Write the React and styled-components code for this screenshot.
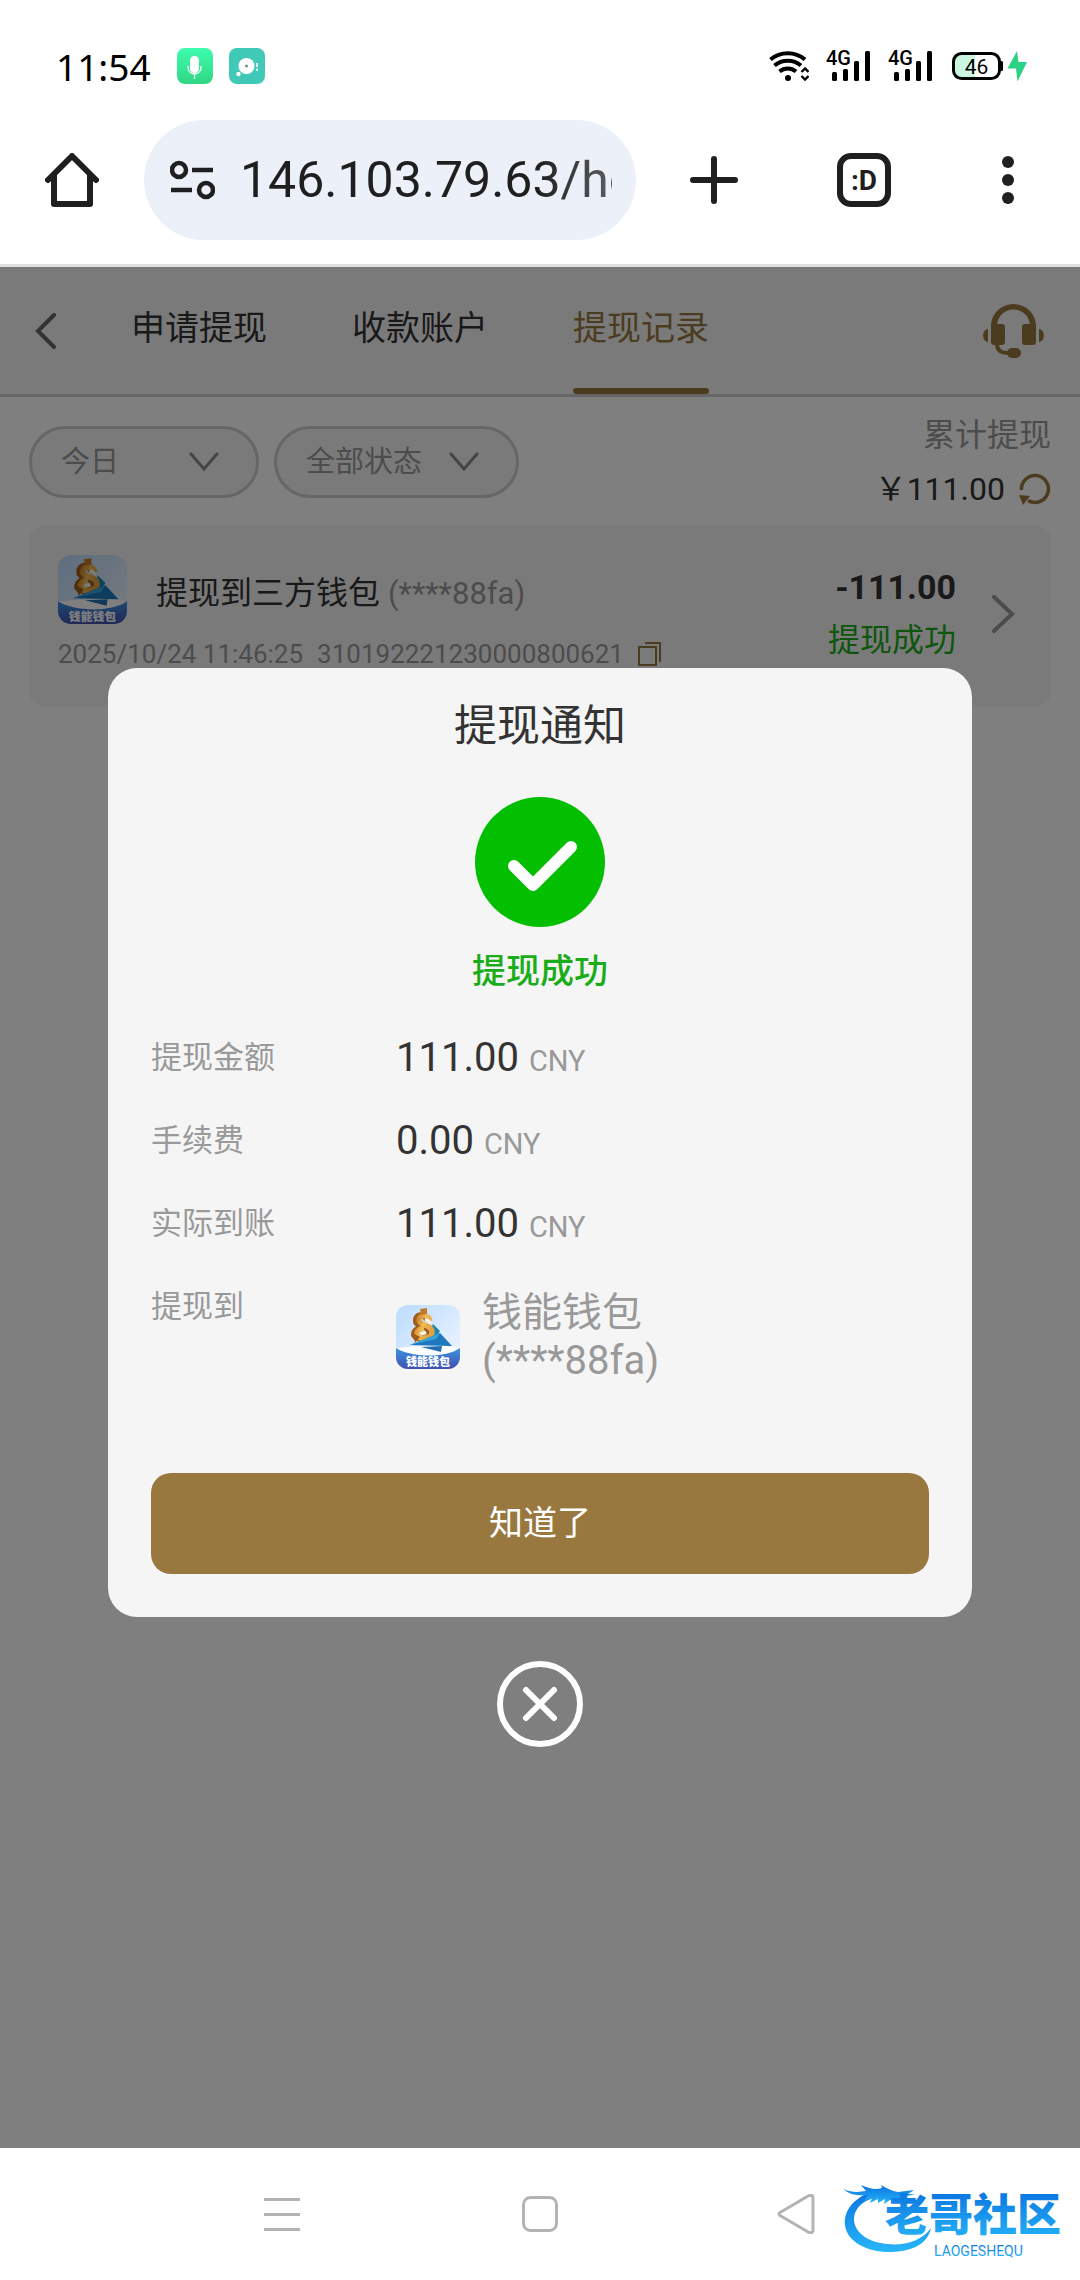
import styled, { createGlobalStyle } from 'styled-components';

const GOLD = '#98783f';

export default function App() {
    return (
        <Screen>
            <GlobalStyle />
            <StatusBar />
            <BrowserBar />
            <Page>
                <PageHeader />
                <Filters />
                <RecordCard />
                <Overlay>
                    <Notice />
                    <CloseButton aria-label="关闭">
                        <svg width="86" height="86" viewBox="0 0 86 86" fill="none" stroke="#fff" strokeWidth="6" strokeLinecap="round">
                            <circle cx="43" cy="43" r="40" />
                            <path d="M29 29L57 57M57 29L29 57" />
                        </svg>
                    </CloseButton>
                </Overlay>
            </Page>
            <SystemNav />
        </Screen>
    );
}

function StatusBar() {
    return (
        <Status>
            <Group $gap="16px">
                <Clock>11:54</Clock>
                <svg width="36" height="36" viewBox="0 0 36 36">
                    <defs>
                        <linearGradient id="mic" x1="0" y1="0" x2="0" y2="1">
                            <stop offset="0" stopColor="#3dfcae" />
                            <stop offset="1" stopColor="#31d684" />
                        </linearGradient>
                    </defs>
                    <rect width="36" height="36" rx="8" fill="url(#mic)" />
                    <rect x="13" y="8" width="9" height="17" rx="4.5" fill="#fff" />
                    <path d="M11 18v1.500a6.500 6.500 0 0 0 13 0V18M17.500 26v5" stroke="#fff" strokeWidth="1.300" fill="none" />
                </svg>
                <svg width="36" height="36" viewBox="0 0 36 36">
                    <rect width="36" height="36" rx="8" fill="#41c9b7" />
                    <circle cx="17.500" cy="18" r="8" fill="#fff" />
                    <circle cx="17.500" cy="18" r="1.500" fill="#6b8f8a" />
                    <circle cx="9.500" cy="26" r="2.200" fill="#fff" />
                    <path d="M28 15v8" stroke="#fff" strokeWidth="1.600" strokeDasharray="4 1.500" />
                </svg>
            </Group>
            <Group $gap="17px">
                <svg width="40" height="32" viewBox="0 0 40 32" fill="none" stroke="#000">
                    <g strokeWidth="4">
                        <path d="M1.500 9.500A27 27 0 0 1 36 9.500" />
                        <path d="M5.500 15.500A20.500 20.500 0 0 1 32 15.500" />
                        <path d="M10.500 21.500A13 13 0 0 1 27 21.500" />
                    </g>
                    <circle cx="19" cy="28" r="3" fill="#000" stroke="none" />
                    <path d="M32.500 22L36 18.500L39.500 22M32.500 26L36 29.500L39.500 26" strokeWidth="2.400" />
                </svg>
                <Signal />
                <Signal />
                <svg width="78" height="32" viewBox="0 0 78 32">
                    <path d="M4 12a8 8 0 0 1 8-8H25V28H12a8 8 0 0 1-8-8z" fill="#c9f5e1" />
                    <rect x="3.500" y="3.500" width="46" height="25" rx="8" fill="none" stroke="#000" strokeWidth="3" />
                    <path d="M50 11h1.500a1.500 1.500 0 0 1 1.500 1.500v7a1.500 1.500 0 0 1-1.500 1.500H50z" />
                    <text x="26.500" y="23.500" fontSize="21" textAnchor="middle">46</text>
                    <path d="M67 1L57.500 18.500H66L67.500 31.500L77 12H68.500z" fill="#2bd284" />
                </svg>
            </Group>
        </Status>
    );
}

function Signal() {
    return (
        <svg width="45" height="48" viewBox="0 -8 45 48">
            <text x="0" y="15" fontSize="20" fontWeight="500">4G</text>
            <rect x="6" y="22" width="5" height="9" rx="1.500" />
            <rect x="17" y="19" width="5" height="12" rx="1.500" />
            <rect x="28" y="11" width="5" height="20" rx="1.500" />
            <rect x="39" y="1" width="5" height="30" rx="1.500" />
        </svg>
    );
}

function BrowserBar() {
    return (
        <Toolbar>
            <IconButton aria-label="主页">
                <svg width="54" height="54" viewBox="0 0 54 54" fill="none" stroke="#1f1f1f" strokeWidth="6" strokeLinecap="round" strokeLinejoin="round">
                    <path d="M3 27L27 3L51 27M9 22V51H45V22" />
                </svg>
            </IconButton>
            <AddressBar>
                <svg width="45" height="40" viewBox="0 0 45 40" fill="none" stroke="#1f1f1f">
                    <circle cx="9" cy="10" r="7" strokeWidth="4.500" />
                    <circle cx="36" cy="30" r="7" strokeWidth="4.500" />
                    <path d="M22 10H43M1 30H22" strokeWidth="4.500" />
                </svg>
                <UrlInput aria-label="网址" defaultValue="146.103.79.63/home" />
            </AddressBar>
            <Actions>
                <IconButton aria-label="新标签页">
                    <svg width="54" height="54" viewBox="0 0 54 54" stroke="#1f1f1f" strokeWidth="6" strokeLinecap="round">
                        <path d="M27 6V48M6 27H48" />
                    </svg>
                </IconButton>
                <TabCount>:D</TabCount>
                <IconButton aria-label="更多">
                    <svg width="42" height="54" viewBox="0 0 42 54" fill="#1f1f1f">
                        <circle cx="21" cy="9" r="6" />
                        <circle cx="21" cy="27" r="6" />
                        <circle cx="21" cy="45" r="6" />
                    </svg>
                </IconButton>
            </Actions>
        </Toolbar>
    );
}

function PageHeader() {
    return (
        <Header>
            <IconButton aria-label="返回">
                <svg width="22" height="36" viewBox="0 0 22 36" fill="none" stroke="#666" strokeWidth="4" strokeLinecap="round">
                    <path d="M19 2L3 18L19 34" />
                </svg>
            </IconButton>
            <Tabs>
                <Tab>申请提现</Tab>
                <Tab>收款账户</Tab>
                <Tab $active>提现记录</Tab>
            </Tabs>
            <IconButton aria-label="客服">
                <svg width="62" height="54" viewBox="0 0 62 54" fill={GOLD}>
                    <path d="M8 25V22a22.500 22 0 0 1 45 0v3h-6v-3a16.500 16.500 0 0 0-33 0v3z" />
                    <rect x="8" y="20" width="14" height="21" rx="3" />
                    <rect x="39" y="20" width="14" height="21" rx="3" />
                    <path d="M5 25v13C-1.500 37-1.500 26 5 25zM56 25v13C62.500 37 62.500 26 56 25z" />
                    <path d="M14 40c0 7 4 9 13 9" fill="none" stroke={GOLD} strokeWidth="4" />
                    <rect x="24" y="44" width="14" height="10" rx="5" />
                </svg>
            </IconButton>
        </Header>
    );
}

function Chevron() {
    return (
        <svg width="30" height="20" viewBox="0 0 30 20" fill="none" stroke="#888" strokeWidth="3" strokeLinecap="round">
            <path d="M2 2L15 17L28 2" />
        </svg>
    );
}

function Filters() {
    return (
        <FilterRow>
            <Group $gap="15px">
                <Picker $width="230px">
                    <select aria-label="日期"><option>今日</option></select>
                    <Chevron />
                </Picker>
                <Picker $width="245px">
                    <select aria-label="状态"><option>全部状态</option></select>
                    <Chevron />
                </Picker>
            </Group>
            <Total>
                <span>累计提现</span>
                <TotalAmount>
                    ￥111.00
                    <IconButton aria-label="刷新">
                        <svg width="32" height="34" viewBox="0 0 32 34">
                            <path d="M2.500 18A13.500 13.500 0 1 1 9 28.500" fill="none" stroke={GOLD} strokeWidth="3.500" />
                            <path d="M0 23L11 24L4 33z" fill={GOLD} />
                        </svg>
                    </IconButton>
                </TotalAmount>
            </Total>
        </FilterRow>
    );
}

function WalletLogo({ size, id }) {
    return (
        <svg width={size} height={size} viewBox="0 0 64 64">
            <defs>
                <linearGradient id={id + 'sky'} x1="0" y1="0" x2="1" y2="1">
                    <stop offset="0" stopColor="#bcdcff" />
                    <stop offset="1" stopColor="#f0f6ff" />
                </linearGradient>
                <linearGradient id={id + 'sea'} x1="0" y1="0" x2="0" y2="1">
                    <stop offset="0" stopColor="#3b93e2" />
                    <stop offset="1" stopColor="#4250ae" />
                </linearGradient>
                <linearGradient id={id + 'gold'} x1="0" y1="0" x2="1" y2="0.500">
                    <stop offset="0" stopColor="#c27a28" />
                    <stop offset="0.500" stopColor="#f3bb55" />
                    <stop offset="1" stopColor="#e0a243" />
                </linearGradient>
                <clipPath id={id + 'clip'}><rect width="64" height="64" rx="12" /></clipPath>
            </defs>
            <g clipPath={`url(#${id}clip)`}>
                <rect width="64" height="64" fill={`url(#${id}sky)`} />
                <path d="M37 19L44 26L40 32L32 30z" fill="#1b86b4" />
                <path d="M31 15C29 8 19 9 20 16C20 22 33 20 33 27C33 35 21 35 18 30C18 25 22 23 26 23" fill="none" stroke="#a05c1a" strokeWidth="6" />
                <path d="M34 16C33 9 23 9 23 15C23 21 36 19 36 27C36 34 24 35 21 30C20 26 24 23 28 24" fill="none" stroke={`url(#${id}gold)`} strokeWidth="5.500" />
                <path d="M24 4L31 3L31 9L25 10z" fill="#c27a28" />
                <path d="M17 28L24 32L19 38z" fill="#a05c1a" />
                <path d="M29 15C32 14 34 16 34 19M25 29C27 27 29 28 30 29" fill="none" stroke="#fff6e4" strokeWidth="2.500" />
                <path d="M14 40L44 28L56 41z" fill="#1d78bd" />
                <path d="M14 40L44 28L40 34z" fill="#36a4d8" />
                <path d="M0 43C20 41 44 40 64 43V54H0z" fill="#fff" />
                <path d="M25 42L46 41L45 47z" fill="#246fb0" />
                <path d="M0 43C14 52 48 54 64 43V64H0z" fill={`url(#${id}sea)`} />
                <text x="32" y="61" fontSize="11" fontWeight="900" textAnchor="middle" fill="#fff">钱能钱包</text>
            </g>
        </svg>
    );
}

function RecordCard() {
    return (
        <Card>
            <div>
                <CardTitle>
                    <WalletLogo size={69} id="card" />
                    <p>提现到三方钱包 <small>(****88fa)</small></p>
                </CardTitle>
                <CardMeta>
                    <span>2025/10/24 11:46:25</span>
                    <span>310192221230000800621</span>
                    <IconButton aria-label="复制">
                        <svg width="24" height="24" viewBox="0 0 24 24" fill="none" stroke={GOLD} strokeWidth="2">
                            <path d="M1 5H18V23H1zM7 1H22V20" />
                        </svg>
                    </IconButton>
                </CardMeta>
            </div>
            <CardAmount>
                <strong>-111.00</strong>
                <span>提现成功</span>
            </CardAmount>
            <svg width="24" height="38" viewBox="0 0 24 38" fill="none" stroke="#999" strokeWidth="4" strokeLinecap="round">
                <path d="M3 2L21 19L3 36" />
            </svg>
        </Card>
    );
}

function Notice() {
    return (
        <Dialog role="dialog" aria-label="提现通知">
            <h2>提现通知</h2>
            <svg width="130" height="130" viewBox="0 0 130 130" fill="none">
                <circle cx="65" cy="65" r="65" fill="#04be02" />
                <path d="M39 69L58 88L96 50" stroke="#fff" strokeWidth="12" strokeLinecap="round" strokeLinejoin="round" />
            </svg>
            <Result>提现成功</Result>
            <Details>
                <dt>提现金额</dt>
                <dd>111.00 <small>CNY</small></dd>
                <dt>手续费</dt>
                <dd>0.00 <small>CNY</small></dd>
                <dt>实际到账</dt>
                <dd>111.00 <small>CNY</small></dd>
                <dt>提现到</dt>
                <Wallet>
                    <WalletLogo size={64} id="dialog" />
                    <span>钱能钱包<br />(****88fa)</span>
                </Wallet>
            </Details>
            <Confirm>知道了</Confirm>
        </Dialog>
    );
}

function SystemNav() {
    return (
        <NavBar>
            <IconButton aria-label="最近任务">
                <svg width="40" height="40" viewBox="0 0 40 40" stroke="#b3b3b3" strokeWidth="3">
                    <path d="M1 5.500H37M1 20.500H37M1 35.500H37" />
                </svg>
            </IconButton>
            <IconButton aria-label="桌面">
                <svg width="40" height="40" viewBox="0 0 40 40" fill="none" stroke="#b3b3b3" strokeWidth="3">
                    <rect x="3.500" y="3.500" width="33" height="33" rx="7" />
                </svg>
            </IconButton>
            <IconButton aria-label="后退">
                <svg width="40" height="40" viewBox="0 0 40 40" fill="none" stroke="#b3b3b3" strokeWidth="3" strokeLinejoin="round">
                    <path d="M3 18.500L32 1.500Q36 0.500 36 4V36Q36 39.500 32 38.500L3 21.500Q1 20 3 18.500z" />
                </svg>
            </IconButton>
            <Watermark width="230" height="80" viewBox="0 0 230 80">
                <defs>
                    <linearGradient id="brand" x1="0" y1="0" x2="0" y2="1">
                        <stop offset="0" stopColor="#0a74e0" />
                        <stop offset="1" stopColor="#27b6f8" />
                    </linearGradient>
                </defs>
                <g fill="url(#brand)">
                    <path d="M30 10C6 20 2 34 3 44C5 62 28 72 50 71C72 70 86 62 89 47C80 60 62 65 45 63C24 61 12 50 12 38C12 28 20 20 34 16z" />
                    <path d="M1 8C10 12 18 11 24 10L19 4C28 8 34 9 40 7L39 4C44 7 50 10 56 11L72 9L66 13L73 13L62 16L70 18L69 21L60 18L52 18L56 22L48 19L42 23L43 18L36 22L36 18L28 22L30 17L22 20L26 14C16 15 8 14 1 8z" />
                    <text x="43" y="50" fontSize="44" fontWeight="900">老哥社区</text>
                    <text x="92" y="75" fontSize="14">LAOGESHEQU</text>
                </g>
            </Watermark>
        </NavBar>
    );
}

const GlobalStyle = createGlobalStyle`
    * {
        box-sizing: border-box;
        margin: 0;
        padding: 0;
    }

    body, button, input, select, text {
        font-family: Roboto, 'Noto Sans CJK SC', sans-serif;
    }

    button {
        background: none;
        border: none;
        cursor: pointer;
    }

    svg {
        display: block;
        flex-shrink: 0;
    }
`;

const Screen = styled.div`
    display: flex;
    flex-direction: column;
    min-height: 100vh;
    background: #fff;
    color: #333;
`;

const Group = styled.div`
    display: flex;
    align-items: center;
    gap: ${({ $gap }) => $gap};
`;

const Status = styled.div`
    display: flex;
    align-items: center;
    justify-content: space-between;
    height: 96px;
    padding: 36px 52px 0 56px;
`;

const Clock = styled.span`
    margin-right: 10px;
    color: #000;
    font-family: 'Noto Sans', sans-serif;
    font-size: 37px;
`;

const Toolbar = styled.div`
    display: flex;
    align-items: center;
    height: 171px;
    padding: 0 51px 0 45px;
    border-bottom: 3px solid #e0e0e0;
`;

const IconButton = styled.button`
    display: flex;
    align-items: center;
    justify-content: center;
`;

const AddressBar = styled.div`
    display: flex;
    align-items: center;
    gap: 25px;
    flex: 1;
    min-width: 0;
    height: 120px;
    margin: 0 51px 0 45px;
    padding: 0 24px 0 26px;
    border-radius: 60px;
    background: #ebf0f9;
`;

const UrlInput = styled.input`
    flex: 1;
    min-width: 0;
    border: none;
    outline: none;
    background: none;
    color: #1f1f1f;
    font-size: 50px;
    mask-image: linear-gradient(to right, #000 80%, rgba(0, 0, 0, 0.7));
`;

const Actions = styled.div`
    display: flex;
    align-items: center;
    gap: 96px;
`;

const TabCount = styled.button`
    width: 54px;
    height: 54px;
    border: 6px solid #1f1f1f;
    border-radius: 14px;
    color: #1f1f1f;
    font-size: 28px;
    font-weight: 700;
`;

const Page = styled.main`
    position: relative;
    flex: 1;
`;

const Header = styled.header`
    display: flex;
    align-items: center;
    height: 130px;
    padding: 0 35px;
    border-bottom: 3px solid #ccc;
    background: #f5f5f5;
`;

const Tabs = styled.nav`
    display: flex;
    gap: 85px;
    flex: 1;
    align-self: stretch;
    margin-left: 74px;
`;

const Tab = styled.button`
    position: relative;
    padding-bottom: 10px;
    color: ${({ $active }) => ($active ? GOLD : '#333')};
    font-size: 34px;

    &::after {
        content: '';
        display: ${({ $active }) => ($active ? 'block' : 'none')};
        position: absolute;
        left: 0;
        right: 0;
        bottom: 0;
        height: 6px;
        border-radius: 3px;
        background: ${GOLD};
    }
`;

const FilterRow = styled.div`
    display: flex;
    align-items: center;
    justify-content: space-between;
    padding: 11px 29px 10px;
`;

const Picker = styled.div`
    position: relative;

    select {
        display: block;
        appearance: none;
        width: ${({ $width }) => $width};
        height: 72px;
        padding-left: 29px;
        border: 3px solid #ccc;
        border-radius: 36px;
        background: #f5f5f5;
        color: #999;
        font-size: 29px;
    }

    svg {
        position: absolute;
        top: 26px;
        right: 40px;
        pointer-events: none;
    }
`;

const Total = styled.div`
    display: flex;
    flex-direction: column;
    align-items: flex-end;
    color: #999;
    font-size: 32px;
    line-height: 54px;
`;

const TotalAmount = styled.div`
    display: flex;
    align-items: center;
    gap: 14px;
    color: #333;
`;

const Card = styled.section`
    display: flex;
    align-items: center;
    gap: 35px;
    margin: 0 29px;
    padding: 29px 36px 34px 29px;
    border-radius: 14px;
    background: #f5f5f5;

    > div:first-child {
        flex: 1;
    }
`;

const CardTitle = styled.div`
    display: flex;
    align-items: center;
    gap: 29px;
    font-size: 32px;

    small {
        color: #999;
        font-size: 31px;
    }
`;

const CardMeta = styled.div`
    display: flex;
    align-items: center;
    gap: 14px;
    margin-top: 12px;
    color: #999;
    font-size: 26px;
    line-height: 36px;
`;

const CardAmount = styled.div`
    display: flex;
    flex-direction: column;
    align-items: flex-end;
    line-height: 53px;

    strong {
        font-size: 34px;
        font-weight: 700;
    }

    span {
        color: #1aad19;
        font-size: 32px;
    }
`;

const Overlay = styled.div`
    position: absolute;
    inset: 0;
    display: flex;
    flex-direction: column;
    align-items: center;
    justify-content: center;
    gap: 44px;
    background: rgba(0, 0, 0, 0.5);
`;

const Dialog = styled.section`
    display: flex;
    flex-direction: column;
    align-items: center;
    width: 80%;
    padding: 29px 43px 43px;
    border-radius: 29px;
    background: #f5f5f5;

    h2 {
        margin-bottom: 42px;
        font-size: 43px;
        font-weight: 400;
        line-height: 58px;
    }
`;

const Result = styled.p`
    margin-top: 20px;
    color: #1aad19;
    font-size: 34px;
    font-weight: 500;
    line-height: 48px;
`;

const Details = styled.dl`
    display: grid;
    grid-template-columns: 245px 1fr;
    row-gap: 35px;
    width: 100%;
    margin-top: 39px;
    line-height: 48px;

    dt {
        color: #999;
        font-size: 31px;
    }

    dd {
        font-size: 40px;
    }

    small {
        color: #999;
        font-size: 29px;
        line-height: 1;
    }
`;

const Wallet = styled.dd`
    display: flex;
    align-items: center;
    gap: 22px;
    padding-top: 6px;
    color: #999;
`;

const Confirm = styled.button`
    width: 100%;
    height: 101px;
    margin-top: 88px;
    padding-bottom: 6px;
    border-radius: 20px;
    background: ${GOLD};
    color: #fff;
    font-size: 34px;
`;

const CloseButton = styled.button`
    width: 86px;
    height: 86px;
`;

const NavBar = styled.footer`
    position: relative;
    display: flex;
    align-items: center;
    justify-content: center;
    gap: 217px;
    height: 132px;
    background: #fff;
`;

const Watermark = styled.svg`
    position: absolute;
    right: 8px;
    bottom: 19px;
`;
